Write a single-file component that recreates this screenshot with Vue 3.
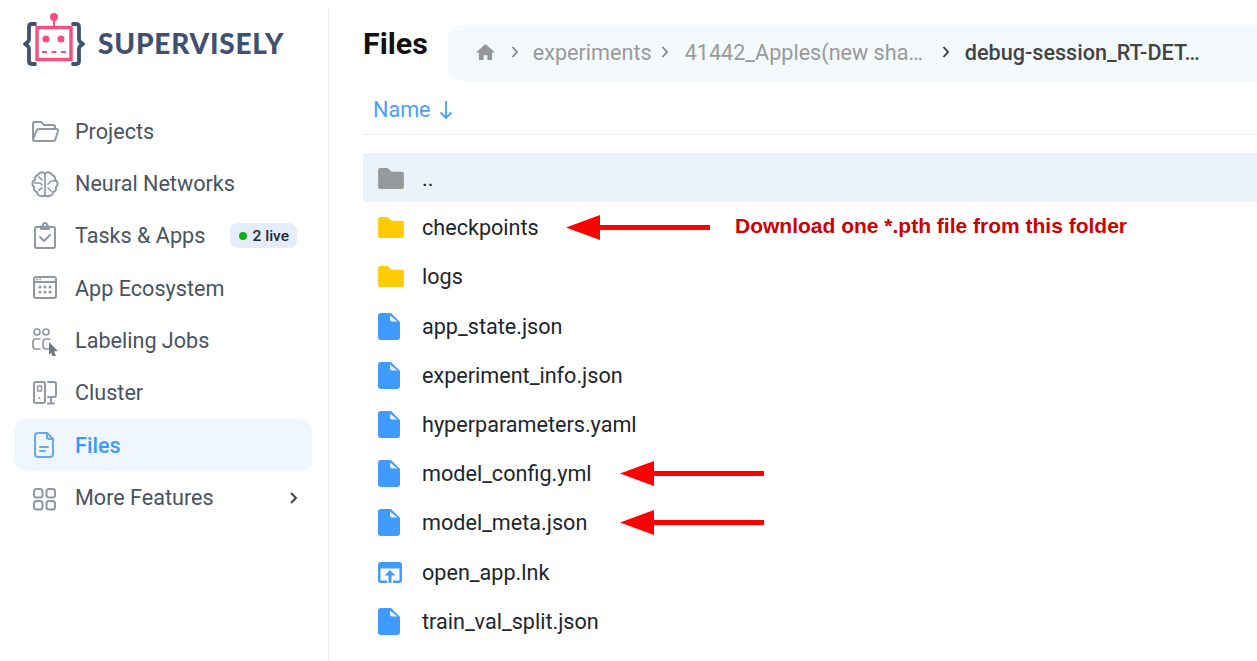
<template>
  <div class="page">

    <!-- SIDEBAR -->
    <aside class="sidebar">
      <div class="logo">
        <svg class="logo-mark" viewBox="0 0 66 56" width="66" height="56">
          <path d="M13 12h-3q-3 0-3 3v12q0 3-4 5 4 2 4 5v12q0 3 3 3h3" fill="none" stroke="#3f5070" stroke-width="3.800" stroke-linecap="round" stroke-linejoin="round" />
          <path d="M51 12h3q3 0 3 3v12q0 3 4 5-4 2-4 5v12q0 3-3 3h-3" fill="none" stroke="#3f5070" stroke-width="3.800" stroke-linecap="round" stroke-linejoin="round" />
          <rect x="15" y="15.500" width="34" height="32" fill="#fff" stroke="#fa4c7e" stroke-width="3.400" />
          <path d="M32 14V6" stroke="#fa4c7e" stroke-width="2" />
          <circle cx="32" cy="5" r="4" fill="#fa4c7e" />
          <circle cx="24" cy="27" r="3.500" fill="#fa4c7e" />
          <circle cx="39" cy="27" r="3.500" fill="#fa4c7e" />
          <path d="M20 40h24" stroke="#fa4c7e" stroke-width="2.200" stroke-dasharray="5 4.500" />
        </svg>
        <span class="logo-text">SUPERVISELY</span>
      </div>

      <nav class="nav">
        <div
            v-for="item in navItems"
            :key="item.name"
            :class="['nav-item', { active: item.name === 'Files' }]"
        >
          <svg class="nav-icon" viewBox="0 0 30 30" width="30" height="30" fill="none" stroke="currentColor" stroke-width="2" stroke-linecap="round" stroke-linejoin="round">
            <template v-if="item.icon === 'folder'">
              <path d="M3 23V8q0-2 2-2h6l3 3h9q2 0 2 2v2" />
              <path d="M3 23q0 2 2 2h18q2 0 2.500-2l2.500-8q.5-2-1.500-2H9q-2 0-2.500 2Z" />
            </template>
            <template v-else-if="item.icon === 'brain'">
              <path d="M15 5a4 4 0 0 0-7 1 4 4 0 0 0-3 5 4 4 0 0 0-1 7 4 4 0 0 0 3 5 4 4 0 0 0 4 4 4 4 0 0 0 4-1 4 4 0 0 0 4 1 4 4 0 0 0 4-4 4 4 0 0 0 3-5 4 4 0 0 0-1-7 4 4 0 0 0-3-5 4 4 0 0 0-7-1Z" />
              <path d="M15 5v22M5 14h5l2 2M25 12h-4l-3 3M9 8l3 3M21 22l-3-3M9 21l3-2" stroke-width="1.700" />
            </template>
            <template v-else-if="item.icon === 'tasks'">
              <rect x="5" y="6" width="20" height="21" rx="2" />
              <path d="M11 6q0-1 1-1h1q0-3 2-3t2 3h1q1 0 1 1v2h-8Z" />
              <path d="M10 16l4 4 6-6" />
            </template>
            <template v-else-if="item.icon === 'eco'">
              <rect x="4" y="4" width="22" height="21" rx="2" />
              <path d="M4 9h22M7 6.500h0M10 6.500h0" />
              <path d="M10 14h0M15 14h0M20 14h0M10 19h0M15 19h0M20 19h0" stroke-width="3" />
            </template>
            <template v-else-if="item.icon === 'jobs'">
              <circle cx="7" cy="6" r="3" stroke-width="1.700" />
              <circle cx="16" cy="6" r="3" stroke-width="1.700" />
              <path d="M10 13H6q-3 0-3 3v4q0 3 3 3h4M20 13h-4q-3 0-3 3v4q0 3 3 3h3" stroke-width="1.700" />
              <path d="M19 16l9 9-4 .5 2 4.500-3 1-2-4.500-2 2.500Z" fill="#6f7782" stroke="none" />
            </template>
            <template v-else-if="item.icon === 'cluster'">
              <rect x="4" y="4" width="11" height="21" rx="2" />
              <rect x="7.500" y="8" width="4" height="5" stroke-width="1.500" />
              <path d="M9.500 20h0" />
              <path d="M18 4h6q2 0 2 2v11q0 2-2 2h-6M21 19v6M18 25.500h6" />
            </template>
            <template v-else-if="item.icon === 'file'">
              <path d="M17 3H8q-3 0-3 3v18q0 3 3 3h12q3 0 3-3V9Z" />
              <path d="M17 3v4q0 2 2 2h4M10 17h8M10 21h5" />
            </template>
            <template v-else>
              <rect x="4" y="6" width="8.500" height="8.500" rx="2.500" />
              <rect x="16.500" y="6" width="8.500" height="8.500" rx="2.500" />
              <rect x="4" y="18" width="8.500" height="8.500" rx="2.500" />
              <rect x="16.500" y="18" width="8.500" height="8.500" rx="2.500" />
            </template>
          </svg>
          <span class="nav-name">{{ item.name }}</span>
          <span v-if="item.live" class="live"><i class="dot"></i>{{ item.live }}</span>
          <svg v-if="item.more" class="more" viewBox="0 0 10 14" width="10" height="14" fill="none" stroke="#3d4550" stroke-width="2">
            <path d="M2 2l5 5-5 5" />
          </svg>
        </div>
      </nav>
    </aside>

    <!-- MAIN -->
    <main class="main">
      <div class="top">
        <h1>Files</h1>
        <div class="crumbs">
          <svg viewBox="0 0 20 17" width="19" height="16" class="home">
            <path d="M10 0 0 9h3v8h5v-5h4v5h5V9h3Z" fill="#969696" />
          </svg>
          <svg class="chev c-home" viewBox="0 0 8 12" width="8" height="12"><path d="M1.500 1l4.500 5-4.500 5" /></svg>
          <span class="crumb">experiments</span>
          <svg class="chev c-exp" viewBox="0 0 8 12" width="8" height="12"><path d="M1.500 1l4.500 5-4.500 5" /></svg>
          <span class="crumb">41442_Apples(new sha…</span>
          <svg class="chev c-last" viewBox="0 0 8 12" width="8" height="12"><path d="M1.500 1l4.500 5-4.500 5" /></svg>
          <span class="crumb last">debug-session_RT-DET…</span>
        </div>
      </div>

      <div class="table-head">
        <span>Name</span>
        <svg viewBox="0 0 14 20" width="14" height="20" fill="none" stroke="#4aa0ff" stroke-width="1.800">
          <path d="M7 1v17M1.500 12.500 7 18l5.500-5.500" />
        </svg>
      </div>

      <div class="rows">
        <div
            v-for="row in rows"
            :key="row.name"
            :class="['row', { up: row.name === '..' }]"
        >
          <svg v-if="row.type === 'folder' || row.type === 'parent'" class="row-icon folder" viewBox="0 0 27 22" width="26" height="21">
            <path d="M2 0h8l4 4h11q2 0 2 2v14q0 2-2 2H2q-2 0-2-2V2q0-2 2-2Z" :fill="row.type === 'parent' ? '#969a9c' : '#ffcb05'" />
          </svg>
          <svg v-else-if="row.type === 'link'" class="row-icon link" viewBox="0 0 24 21" width="24" height="21">
            <path fill-rule="evenodd" d="M3 0h18q3 0 3 3v15q0 3-3 3h-6v-2.500h6.500V6.500h-19v12H9V21H3q-3 0-3-3V3q0-3 3-3Z" fill="#3f9bff" />
            <path d="M12 8l5.500 5.500h-4V21h-3v-7.500h-4Z" fill="#3f9bff" />
          </svg>
          <svg v-else class="row-icon file" viewBox="0 0 22 27" width="22" height="27">
            <path d="M3 0h10l9 9v15q0 3-3 3H3q-3 0-3-3V3q0-3 3-3Z" fill="#3f9bff" />
            <path d="M12 2.500v4q0 2 2 2h5.500Z" fill="#e6f1ff" />
          </svg>

          <span class="row-name">{{ row.name }}</span>

          <svg v-if="row.arrow" class="arrow" :style="{ left: row.arrow + 'px' }" viewBox="0 0 144 25" width="144" height="25">
            <path d="M0 12.500 34 0v10h110v5H34v10Z" fill="#ff0000" />
          </svg>
          <span v-if="row.note" class="note">{{ row.note }}</span>
        </div>
      </div>
    </main>

  </div>
</template>

<script setup>
const navItems = [
  { name: 'Projects', icon: 'folder' },
  { name: 'Neural Networks', icon: 'brain' },
  { name: 'Tasks & Apps', icon: 'tasks', live: '2 live' },
  { name: 'App Ecosystem', icon: 'eco' },
  { name: 'Labeling Jobs', icon: 'jobs' },
  { name: 'Cluster', icon: 'cluster' },
  { name: 'Files', icon: 'file' },
  { name: 'More Features', icon: 'grid', more: true }
]

const rows = [
  { name: '..', type: 'parent' },
  { name: 'checkpoints', type: 'folder', arrow: 203, note: 'Download one *.pth file from this folder' },
  { name: 'logs', type: 'folder' },
  { name: 'app_state.json', type: 'file' },
  { name: 'experiment_info.json', type: 'file' },
  { name: 'hyperparameters.yaml', type: 'file' },
  { name: 'model_config.yml', type: 'file', arrow: 257 },
  { name: 'model_meta.json', type: 'file', arrow: 257 },
  { name: 'open_app.lnk', type: 'link' },
  { name: 'train_val_split.json', type: 'file' }
]
</script>

<style>
html, body {
  margin: 0;
  background: #fff;
  overflow: hidden;
}
</style>

<style scoped>
.page {
  display: flex;
  width: 1257px;
  height: 661px;
  overflow: hidden;
  font-family: Roboto, sans-serif;
}

/* SIDEBAR */
.sidebar {
  flex: none;
  width: 329px;
  height: 652px;
  margin-top: 9px;
  box-sizing: border-box;
  border-right: 1px solid #e9ecef;
  padding: 4px 16px 0 14px;
}

.logo {
  display: flex;
  align-items: center;
  gap: 11px;
  height: 54px;
  margin-left: 8px;
}

.logo-mark {
  flex: none;
}

.logo-text {
  margin-left: -1px;
  margin-top: 6px;
  font-family: Lato, sans-serif;
  font-weight: 900;
  font-size: 28px;
  letter-spacing: 0.8px;
  color: #3f5070;
}

.nav {
  margin-top: 38px;
}

.nav-item {
  display: flex;
  align-items: center;
  height: 52.35px;
  padding-left: 16px;
  padding-right: 15px;
  border-radius: 12px;
  color: #4a5361;
  font-size: 21.6px;
}

.nav-item.active {
  background: #eff6fd;
  color: #3a9bff;
  font-weight: 500;
}

.nav-icon {
  flex: none;
  margin-right: 15px;
  color: #8f98a3;
}

.active .nav-icon {
  color: #6aa7f2;
}

.nav-name {
  flex: none;
}

.live {
  display: flex;
  align-items: center;
  gap: 6px;
  height: 25px;
  margin-left: auto;
  padding: 0 8px 0 9px;
  border-radius: 8px;
  background: #e5edfb;
  color: #232a36;
  font-size: 15.5px;
  font-weight: 500;
}

.dot {
  width: 8px;
  height: 8px;
  border-radius: 50%;
  background: #13ae1b;
}

.more {
  margin-left: auto;
  margin-right: -2px;
}

/* MAIN */
.main {
  flex: 1;
  min-width: 0;
  padding: 25px 0 0 34px;
}

.top {
  display: flex;
  align-items: center;
  gap: 20px;
}

h1 {
  margin: 0 0 20px;
  font-size: 30.4px;
  font-weight: 700;
  line-height: 35px;
  color: #111;
}

.crumbs {
  flex: 1;
  display: flex;
  align-items: center;
  height: 56px;
  box-sizing: border-box;
  padding: 0 0 2px 28px;
  border-radius: 14px 0 0 14px;
  background: #f4f9fc;
  white-space: nowrap;
  font-size: 21.6px;
  color: #9a9a9a;
}

.home {
  flex: none;
}

.chev {
  flex: none;
  fill: none;
  stroke: #858585;
  stroke-width: 1.800;
}

.c-home {
  margin: 0 14px 0 16px;
}

.c-exp {
  margin: 0 16px 0 9px;
}

.c-last {
  margin: 0 15px 0 19px;
  stroke: #333;
}

.last {
  font-weight: 500;
  color: #444;
}

.table-head {
  display: flex;
  align-items: center;
  gap: 8px;
  height: 54px;
  box-sizing: border-box;
  padding: 4px 0 0 10px;
  border-bottom: 1px solid #e9ecef;
  color: #4aa0ff;
  font-size: 21.6px;
}

/* ROWS */
.rows {
  margin-top: 18px;
}

.row {
  position: relative;
  display: flex;
  align-items: center;
  height: 49.2px;
  box-sizing: border-box;
  padding-top: 2px;
  color: #20262d;
  font-size: 21.6px;
}

.row.up {
  background: #e9f3f9;
}

.row-icon {
  flex: none;
  margin-left: 15px;
}

.row-icon.folder {
  margin-right: 18px;
}

.row-icon.file {
  margin-right: 22px;
}

.row-icon.link {
  margin-right: 20px;
}

.arrow {
  position: absolute;
  top: 12.5px;
}

.note {
  position: absolute;
  left: 372px;
  top: 12px;
  font-family: "Liberation Sans", sans-serif;
  font-weight: 700;
  font-size: 21px;
  color: #cc0000;
  white-space: nowrap;
}
</style>
